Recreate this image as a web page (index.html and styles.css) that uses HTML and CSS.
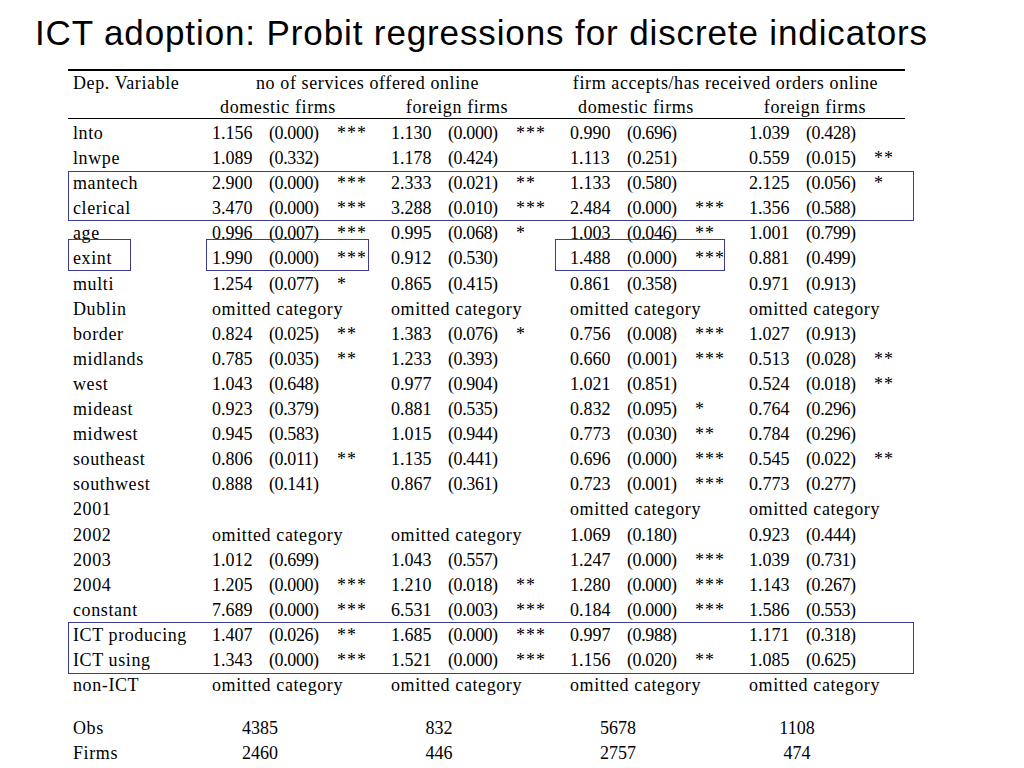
FILE: index.html
```html
<!DOCTYPE html>
<html>
<head>
<meta charset="utf-8">
<link rel="stylesheet" href="styles.css">
</head>
<body>
<div class="slide">
  <h1 class="title">ICT adoption: Probit regressions for discrete indicators</h1>
  <div class="table">
    <div class="head">
      <div class="row hrow1">
        <div class="lab">Dep. Variable</div>
        <div class="h2span">no of services offered online</div>
        <div class="h2span">firm accepts/has received orders online</div>
      </div>
      <div class="row hrow2">
        <div class="lab"></div>
        <div class="h1span">domestic firms</div>
        <div class="h1span">foreign firms</div>
        <div class="h1span">domestic firms</div>
        <div class="h1span">foreign firms</div>
      </div>
    </div>
    <div class="body" id="body"></div>
    <div class="foot">
      <div class="row"><div class="lab">Obs</div><div class="n">4385</div><div class="n">832</div><div class="n">5678</div><div class="n n4">1108</div></div>
      <div class="row"><div class="lab">Firms</div><div class="n">2460</div><div class="n">446</div><div class="n">2757</div><div class="n n4">474</div></div>
    </div>
  </div>
  <div class="box box-occ"></div>
  <div class="box box-exint"></div>
  <div class="box box-ex1"></div>
  <div class="box box-ex3"></div>
  <div class="box box-ict"></div>
</div>
<script src="script.js"></script>
</body>
</html>
```

FILE: script.js
```js
const O = "omit";
const rows = [
  ["lnto", ["1.156","(0.000)","***"],["1.130","(0.000)","***"],["0.990","(0.696)",""],["1.039","(0.428)",""]],
  ["lnwpe", ["1.089","(0.332)",""],["1.178","(0.424)",""],["1.113","(0.251)",""],["0.559","(0.015)","**"]],
  ["mantech", ["2.900","(0.000)","***"],["2.333","(0.021)","**"],["1.133","(0.580)",""],["2.125","(0.056)","*"]],
  ["clerical", ["3.470","(0.000)","***"],["3.288","(0.010)","***"],["2.484","(0.000)","***"],["1.356","(0.588)",""]],
  ["age", ["0.996","(0.007)","***"],["0.995","(0.068)","*"],["1.003","(0.046)","**"],["1.001","(0.799)",""]],
  ["exint", ["1.990","(0.000)","***"],["0.912","(0.530)",""],["1.488","(0.000)","***"],["0.881","(0.499)",""]],
  ["multi", ["1.254","(0.077)","*"],["0.865","(0.415)",""],["0.861","(0.358)",""],["0.971","(0.913)",""]],
  ["Dublin", O, O, O, O],
  ["border", ["0.824","(0.025)","**"],["1.383","(0.076)","*"],["0.756","(0.008)","***"],["1.027","(0.913)",""]],
  ["midlands", ["0.785","(0.035)","**"],["1.233","(0.393)",""],["0.660","(0.001)","***"],["0.513","(0.028)","**"]],
  ["west", ["1.043","(0.648)",""],["0.977","(0.904)",""],["1.021","(0.851)",""],["0.524","(0.018)","**"]],
  ["mideast", ["0.923","(0.379)",""],["0.881","(0.535)",""],["0.832","(0.095)","*"],["0.764","(0.296)",""]],
  ["midwest", ["0.945","(0.583)",""],["1.015","(0.944)",""],["0.773","(0.030)","**"],["0.784","(0.296)",""]],
  ["southeast", ["0.806","(0.011)","**"],["1.135","(0.441)",""],["0.696","(0.000)","***"],["0.545","(0.022)","**"]],
  ["southwest", ["0.888","(0.141)",""],["0.867","(0.361)",""],["0.723","(0.001)","***"],["0.773","(0.277)",""]],
  ["2001", null, null, O, O],
  ["2002", O, O, ["1.069","(0.180)",""],["0.923","(0.444)",""]],
  ["2003", ["1.012","(0.699)",""],["1.043","(0.557)",""],["1.247","(0.000)","***"],["1.039","(0.731)",""]],
  ["2004", ["1.205","(0.000)","***"],["1.210","(0.018)","**"],["1.280","(0.000)","***"],["1.143","(0.267)",""]],
  ["constant", ["7.689","(0.000)","***"],["6.531","(0.003)","***"],["0.184","(0.000)","***"],["1.586","(0.553)",""]],
  ["ICT producing", ["1.407","(0.026)","**"],["1.685","(0.000)","***"],["0.997","(0.988)",""],["1.171","(0.318)",""]],
  ["ICT using", ["1.343","(0.000)","***"],["1.521","(0.000)","***"],["1.156","(0.020)","**"],["1.085","(0.625)",""]],
  ["non-ICT", O, O, O, O]
];
const body = document.getElementById("body");
for (const r of rows) {
  const row = document.createElement("div");
  row.className = "row";
  let html = '<div class="lab">' + r[0] + '</div>';
  for (let g = 1; g <= 4; g++) {
    const c = r[g];
    if (c === O) html += '<div class="omit">omitted category</div>';
    else if (c === null) html += '<div class="omit"></div>';
    else html += '<div class="c">' + c[0] + '</div><div class="c p">' + c[1] + '</div><div class="c st">' + c[2] + '</div>';
  }
  row.innerHTML = html;
  body.appendChild(row);
}
```

FILE: styles.css
```css
html, body {
  margin: 0;
  padding: 0;
  background: #fff;
}
.slide {
  position: relative;
  width: 1024px;
  height: 768px;
  overflow: hidden;
  font-family: "Liberation Serif", "Times New Roman", serif;
  color: #000;
}
.title {
  margin: 0;
  padding: 13px 0 0 35px;
  font-family: "Liberation Sans", Arial, sans-serif;
  font-weight: normal;
  font-size: 35px;
  letter-spacing: 0.88px;
  line-height: 40px;
  height: 56px;
  white-space: nowrap;
}
.table {
  margin-left: 68px;
  width: 837px;
  font-size: 18px;
  letter-spacing: 0.6px;
}
.head {
  border-top: 2px solid #000;
  border-bottom: 1.5px solid #000;
}
.row {
  display: grid;
  grid-template-columns: 144px repeat(3, 56px 69px 54px) 56px 69px 31px;
  height: 25.1px;
  line-height: 25px;
  white-space: nowrap;
}
.lab {
  padding-left: 5px;
}
.hrow1 {
  height: 25px;
}
.hrow2 {
  height: 22px;
  line-height: 22px;
}
.h2span {
  grid-column: span 6;
  text-align: center;
  padding-right: 47px;
}
.h1span {
  grid-column: span 3;
  text-align: center;
  padding-right: 47px;
}
.hrow1 .h2span:last-child {
  padding-right: 24px;
}
.hrow2 .h1span:last-child {
  padding-right: 24px;
}
.omit {
  grid-column: span 3;
}
.c {
  letter-spacing: 0;
}
.p {
  letter-spacing: -0.4px;
  padding-left: 1px;
}
.st {
  letter-spacing: 1px;
}
.body {
  margin-top: 2px;
}
.foot {
  margin-top: 18px;
}
.n {
  grid-column: span 3;
  text-align: center;
  padding-right: 83px;
  letter-spacing: 0;
}
.n4 {
  padding-right: 60px;
}
.box {
  position: absolute;
  border: 1.5px solid #3b3b8f;
  box-sizing: border-box;
}
.box-occ { left: 68px; top: 171px; width: 846px; height: 50px; }
.box-exint { left: 68px; top: 239px; width: 63px; height: 32px; }
.box-ex1 { left: 206px; top: 239px; width: 163px; height: 32px; }
.box-ex3 { left: 555px; top: 239px; width: 170px; height: 32px; }
.box-ict { left: 68px; top: 622px; width: 846px; height: 52px; }
```
